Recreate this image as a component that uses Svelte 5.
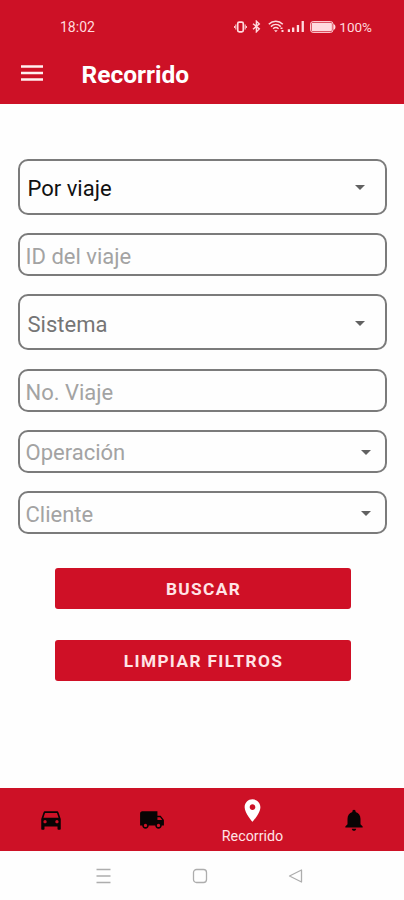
<script lang="ts">
  type Field = {
    label: string;
    kind: 'select' | 'input' | 'compact';
    filled?: boolean;
  };

  const fields: Field[] = [
    { label: 'Por viaje', kind: 'select', filled: true },
    { label: 'ID del viaje', kind: 'input' },
    { label: 'Sistema', kind: 'select' },
    { label: 'No. Viaje', kind: 'input' },
    { label: 'Operación', kind: 'compact' },
    { label: 'Cliente', kind: 'compact' }
  ];

  const tabs = [
    {
      name: 'Vehículos',
      path: 'M18.92 5.01C18.72 4.42 18.16 4 17.5 4h-11c-.66 0-1.21.42-1.42 1.01L3 11v9c0 .55.45 1 1 1h1c.55 0 1-.45 1-1v-2h12v2c0 .55.45 1 1 1h1c.55 0 1-.45 1-1v-9l-2.08-5.99zM6.5 15c-.83 0-1.5-.67-1.5-1.5S5.67 12 6.5 12s1.5.67 1.5 1.5S7.33 15 6.5 15zm11 0c-.83 0-1.5-.67-1.5-1.5s.67-1.5 1.5-1.5 1.5.67 1.5 1.5-.67 1.5-1.5 1.5zM5 10l1.5-4.5h11L19 10H5z'
    },
    {
      name: 'Camiones',
      path: 'M20 8h-3V4H3c-1.1 0-2 .9-2 2v11h2c0 1.66 1.34 3 3 3s3-1.34 3-3h6c0 1.66 1.34 3 3 3s3-1.34 3-3h2v-5l-3-4zM6 18.5c-.83 0-1.5-.67-1.5-1.5s.67-1.5 1.5-1.5 1.5.67 1.5 1.5-.67 1.5-1.5 1.5zm13.5-9l1.96 2.5H17V9.5h2.5zm-1.5 9c-.83 0-1.5-.67-1.5-1.5s.67-1.5 1.5-1.5 1.5.67 1.5 1.5-.67 1.5-1.5 1.5z'
    },
    {
      name: 'Recorrido',
      path: 'M12 2C8.13 2 5 5.13 5 9c0 5.25 7 13 7 13s7-7.75 7-13c0-3.87-3.13-7-7-7zm0 9.5c-1.38 0-2.5-1.12-2.5-2.5s1.12-2.5 2.5-2.5 2.5 1.12 2.5 2.5-1.12 2.5-2.5 2.5z'
    },
    {
      name: 'Alertas',
      path: 'M12 22c1.1 0 2-.9 2-2h-4c0 1.1.89 2 2 2zm6-6v-5c0-3.07-1.64-5.64-4.5-6.32V4c0-.83-.67-1.5-1.5-1.5s-1.5.67-1.5 1.5v.68C7.63 5.36 6 7.92 6 11v5l-2 2v1h16v-1l-2-2z'
    }
  ];

  let active = $state('Recorrido');
</script>

<div class="screen">
  <header>
    <div class="status-bar">
      <span class="clock">18:02</span>
      <div class="indicators">
        <svg class="vibrate" width="13" height="12" viewBox="0 0 13 12">
          <rect x="3.7" y="1.2" width="5.6" height="9.6" rx="1.5" fill="none" stroke="currentColor" stroke-width="1.7" />
          <path d="M1.8 3.5v5M11.2 3.5v5M.6 5v2M12.4 5v2" stroke="currentColor" />
        </svg>
        <svg class="bluetooth" width="9" height="13" viewBox="0 0 9 13">
          <path d="M1 3.7l6.3 5.2-2.9 2.9V1.2l2.9 2.7L1 9.3" fill="none" stroke="currentColor" stroke-width="1.4" />
        </svg>
        <svg class="wifi" width="17" height="13" viewBox="0 0 17 13">
          <g fill="none" stroke="currentColor" stroke-width="1.5">
            <path d="M.8 4.2c4-3.9 10-3.9 14 0" />
            <path d="M2.9 6.6c2.9-2.7 7-2.7 9.9 0" />
            <path d="M5.1 8.8c1.7-1.5 3.8-1.5 5.5 0" />
          </g>
          <path d="M6 10.2h3.7l-1.8 2zM12.5 7.5h2V9h-2zM13.5 10h2v2h-2z" fill="currentColor" />
        </svg>
        <svg class="signal" width="18" height="13" viewBox="0 0 18 13">
          <path d="M.8 9.3H3V12H.8zM5 7.5h2.3V12H5zM9.8 5h2.3v7H9.8zM14.6 1h2.3v11h-2.3z" fill="currentColor" />
        </svg>
        <svg class="battery" width="26" height="12" viewBox="0 0 26 12">
          <rect x=".6" y=".6" width="22.4" height="10.8" rx="2.5" fill="none" stroke="currentColor" />
          <rect x="1.7" y="1.7" width="20.2" height="8.6" rx="1.2" fill="currentColor" />
          <path d="M23.5 3q2 .5 2 3t-2 3z" fill="currentColor" />
        </svg>
        <span>100%</span>
      </div>
    </div>
    <div class="app-bar">
      <button class="menu" aria-label="Menú">
        <svg width="22" height="16" viewBox="0 0 22 16">
          <path d="M0 1.6h22M0 8h22M0 14.4h22" stroke="currentColor" stroke-width="2.5" />
        </svg>
      </button>
      <h1>Recorrido</h1>
    </div>
  </header>

  <main>
    <div class="fields">
      {#each fields as field}
        <div class="field {field.kind}" class:filled={field.filled}>
          <span>{field.label}</span>
          {#if field.kind !== 'input'}
            <svg width="10" height="5" viewBox="0 0 10 5">
              <path d="M0 0h10L5 5z" fill="#616161" />
            </svg>
          {/if}
        </div>
      {/each}
    </div>
    <div class="actions">
      <button class="search">Buscar</button>
      <button class="clear">Limpiar filtros</button>
    </div>
  </main>

  <nav class="tabs">
    {#each tabs as tab}
      <button class="tab" class:active={active === tab.name} aria-label={tab.name} onclick={() => (active = tab.name)}>
        <svg width="26" height="26" viewBox="0 0 24 24">
          <path d={tab.path} fill="currentColor" fill-rule="evenodd" />
        </svg>
        {#if active === tab.name}
          <span>{tab.name}</span>
        {/if}
      </button>
    {/each}
  </nav>

  <div class="system-nav">
    <svg width="15" height="16" viewBox="0 0 15 16">
      <path d="M.5 1.5h14M.5 8h14M.5 14.5h14" />
    </svg>
    <svg width="16" height="16" viewBox="0 0 16 16">
      <rect x="1.5" y="1.5" width="13" height="13" rx="3" />
    </svg>
    <svg width="15" height="16" viewBox="0 0 15 16">
      <path d="M13.5 2v12L1.5 8z" stroke-linejoin="round" />
    </svg>
  </div>
</div>

<style>
  :global(body) {
    margin: 0;
    background: #fefefe;
  }

  .screen {
    display: flex;
    flex-direction: column;
    width: 404px;
    height: 900px;
    font-family: Roboto, 'Liberation Sans', sans-serif;
    background: #fefefe;
    overflow: hidden;
  }

  button {
    padding: 0;
    border: none;
    background: none;
    font-family: inherit;
    cursor: pointer;
  }

  svg {
    display: block;
    flex: none;
  }

  header {
    height: 104px;
    background: #cd1126;
    color: #fff;
  }

  .status-bar {
    display: flex;
    justify-content: space-between;
    align-items: center;
    box-sizing: border-box;
    height: 44px;
    padding: 9px 32px 0 60px;
    font-size: 13.5px;
    color: #ffdade;
  }

  .clock {
    font-size: 14px;
  }

  .indicators {
    display: flex;
    align-items: center;
  }

  .bluetooth {
    margin-left: 5px;
  }

  .wifi {
    margin-left: 7px;
  }

  .signal {
    margin-left: 2px;
  }

  .battery {
    margin: 0 3px 0 5px;
  }

  .app-bar {
    display: flex;
    align-items: center;
    height: 58px;
    padding-left: 21px;
  }

  .menu {
    color: #fff0f0;
  }

  h1 {
    margin: 2px 0 0 38.5px;
    font-size: 24.5px;
    font-weight: 700;
  }

  main {
    flex: 1;
    padding: 54.5px 17px 0 18px;
  }

  .fields {
    display: flex;
    flex-direction: column;
    gap: 18.2px;
  }

  .field {
    display: flex;
    justify-content: space-between;
    align-items: center;
    box-sizing: border-box;
    height: 43px;
    padding: 2px 14px 0 5.5px;
    border: 2px solid #7b7b7b;
    border-radius: 10px;
    font-size: 22px;
    color: #a3a3a3;
  }

  .field.input {
    padding-top: 4px;
  }

  .field.select {
    height: 56.3px;
    padding: 2px 20px 0 7.5px;
    color: #757575;
  }

  .field.select span {
    padding-top: 2px;
  }

  .field.compact span {
    padding-top: 1px;
  }

  .field.filled {
    color: #111;
  }

  .actions {
    display: flex;
    flex-direction: column;
    gap: 31px;
    padding: 34.4px 36px 0 36.5px;
  }

  .actions button {
    height: 41px;
    padding: 1px 0 0 1.5px;
    border-radius: 3px;
    background: #cf1026;
    color: #ffe4e6;
    font-size: 17.3px;
    font-weight: 700;
    letter-spacing: 1.35px;
    text-transform: uppercase;
  }

  .tabs {
    display: grid;
    grid-template-columns: repeat(4, 1fr);
    height: 63px;
    background: #cd1126;
  }

  .tab {
    display: flex;
    flex-direction: column;
    align-items: center;
    justify-content: center;
    color: #090404;
  }

  .tab.active {
    padding-top: 1px;
    color: #fff;
  }

  .tab.active svg {
    width: 27px;
    height: 27px;
  }

  .tab span {
    margin-top: 4px;
    font-size: 14.3px;
    line-height: 16px;
    color: #ffe4e6;
  }

  .system-nav {
    display: flex;
    justify-content: space-between;
    align-items: center;
    height: 49px;
    padding: 0 101px 0 96px;
  }

  .system-nav svg {
    fill: none;
    stroke: #adadad;
    stroke-width: 1.3;
  }
</style>
